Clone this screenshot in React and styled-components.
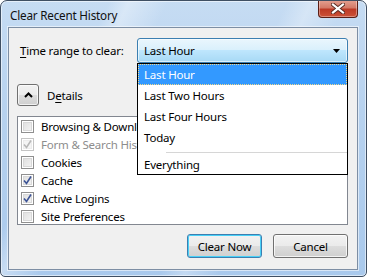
import React from 'react';
import styled, { createGlobalStyle } from 'styled-components';

const Global = createGlobalStyle`
  html, body {
    margin: 0;
    padding: 0;
    background: #ffffff;
  }
  body {
    font-family: 'Noto Sans', 'Liberation Sans', sans-serif;
    font-size: 11.5px;
    letter-spacing: -0.2px;
    color: #000;
  }
`;

const Window = styled.div`
  width: 367px;
  height: 277px;
  box-sizing: border-box;
  display: flex;
  flex-direction: column;
  padding: 0 8px 6px 7px;
  border: 1px solid #3f4f63;
  border-radius: 7px 7px 5px 5px;
  background:
    linear-gradient(115deg, transparent 0 22%, rgba(255, 255, 255, 0.35) 26%, transparent 34%,
      transparent 58%, rgba(255, 255, 255, 0.3) 63%, transparent 70%),
    linear-gradient(180deg, #c6dcf3 0%, #b7d2ef 40%, #a9c9ec 100%);
  box-shadow: inset 0 0 0 1px rgba(255, 255, 255, 0.55);
  overflow: hidden;
`;

const TitleBar = styled.div`
  height: 26px;
  display: flex;
  align-items: flex-start;
  justify-content: space-between;
`;

const Title = styled.div`
  padding: 6px 0 0 2px;
  font-size: 11.7px;
  color: #101010;
`;

const CloseButton = styled.div`
  width: 40px;
  height: 18px;
  margin-top: -1px;
  box-sizing: border-box;
  display: flex;
  align-items: center;
  justify-content: center;
  border: 1px solid #5a1e16;
  border-top: none;
  border-radius: 0 0 4px 4px;
  background: linear-gradient(180deg, #e5a293 0%, #d47a68 45%, #bd3a26 55%, #cc5238 100%);
  box-shadow: inset 0 0 0 1px rgba(255, 255, 255, 0.35);
`;

const Client = styled.div`
  flex: 1;
  display: flex;
  flex-direction: column;
  padding: 10px 9px 0 8px;
  background: #f0f0f0;
  border: 1px solid #7d8ea4;
  box-shadow: 0 0 0 1px rgba(255, 255, 255, 0.55);
`;

const RangeRow = styled.div`
  display: flex;
  align-items: center;
  justify-content: space-between;
  height: 25px;
`;

const Label = styled.span`
  margin-left: 3px;
  color: #000;
`;

const Key = styled.span`
  text-decoration: underline;
  text-underline-offset: 2px;
`;

const SelectWrap = styled.div`
  position: relative;
  width: 211px;
  height: 25px;
`;

const Select = styled.div`
  height: 100%;
  box-sizing: border-box;
  display: flex;
  align-items: center;
  justify-content: space-between;
  padding: 0 6px 0 6px;
  border: 1px solid #3c7fb1;
  border-radius: 3px;
  background: linear-gradient(180deg, #eaf6fd 0%, #d9f0fc 48%, #bee6fd 50%, #a7d9f5 100%);
  box-shadow: inset 0 0 0 1px rgba(255, 255, 255, 0.6);
`;

const Popup = styled.div`
  position: absolute;
  top: 100%;
  left: 0;
  width: 211px;
  box-sizing: border-box;
  background: #fff;
  border: 1px solid #000;
  z-index: 2;
`;

const Option = styled.div`
  height: ${(p) => (p.$short ? 20 : 21)}px;
  box-sizing: border-box;
  display: flex;
  align-items: center;
  padding-left: 6px;
  color: ${(p) => (p.$active ? '#fff' : '#000')};
  background: ${(p) => (p.$active ? '#3399ff' : 'transparent')};
  outline: ${(p) => (p.$active ? '1px dotted #f3d98a' : 'none')};
  outline-offset: -1px;
`;

const Separator = styled.div`
  height: 6px;
  display: flex;
  align-items: center;
  padding-left: 28px;
  &::after {
    content: '';
    flex: 1;
    height: 1px;
    margin-top: 2px;
    background: #d6d6d6;
  }
`;

const DetailsRow = styled.div`
  display: flex;
  align-items: center;
  gap: 8px;
  margin-top: 21px;
  height: 22px;
`;

const ToggleButton = styled.div`
  width: 22px;
  height: 22px;
  box-sizing: border-box;
  display: flex;
  align-items: center;
  justify-content: center;
  border: 1px solid #707070;
  border-radius: 3px;
  background: linear-gradient(180deg, #f2f2f2 0%, #ebebeb 48%, #dddddd 50%, #cfcfcf 100%);
  box-shadow: inset 0 0 0 1px rgba(255, 255, 255, 0.7);
`;

const List = styled.div`
  margin-top: 10px;
  height: 109px;
  box-sizing: border-box;
  background: #fff;
  border: 1px solid #828790;
  overflow: hidden;
`;

const Item = styled.div`
  height: 18px;
  display: flex;
  align-items: center;
  gap: 7px;
  padding-left: 3px;
  white-space: nowrap;
  color: ${(p) => (p.$disabled ? '#8d8d8d' : '#000')};
`;

const Box = styled.div`
  width: 13px;
  height: 13px;
  box-sizing: border-box;
  flex: none;
  display: flex;
  align-items: center;
  justify-content: center;
  border: 1px solid ${(p) => (p.$disabled ? '#c5c5c5' : '#8f8f8f')};
  box-shadow: inset 0 0 0 1px #fff, inset 0 0 0 2px ${(p) => (p.$disabled ? '#ececec' : '#d8d8d8')};
  background: ${(p) =>
    p.$disabled ? '#f4f4f4' : 'linear-gradient(135deg, #dcdcdc 0%, #f6f6f6 100%)'};
`;

const Footer = styled.div`
  display: flex;
  justify-content: flex-end;
  gap: 11px;
  margin-top: 9px;
`;

const Button = styled.div`
  width: 75px;
  height: 24px;
  box-sizing: border-box;
  display: flex;
  align-items: center;
  justify-content: center;
  border: 1px solid ${(p) => (p.$default ? '#3c7fb1' : '#707070')};
  border-radius: 3px;
  background: linear-gradient(180deg, #f2f2f2 0%, #ebebeb 48%, #dddddd 50%, #cfcfcf 100%);
  box-shadow: inset 0 0 0 1px ${(p) => (p.$default ? '#48d0f7' : 'rgba(255,255,255,0.75)')};
  color: #000;
`;

const Check = ({ disabled }) => (
  <svg width="9" height="9" viewBox="0 0 9 9">
    <path
      d="M1 4.5 L3.5 7.5 L8 0.5"
      fill="none"
      stroke={disabled ? '#b8b8b8' : '#3d5496'}
      strokeWidth="1.6"
    />
  </svg>
);

const items = [
  { label: 'Browsing & Download History', checked: false },
  { label: 'Form & Search History', checked: true, disabled: true },
  { label: 'Cookies', checked: false },
  { label: 'Cache', checked: true },
  { label: 'Active Logins', checked: true },
  { label: 'Site Preferences', checked: false },
];

export default function App() {
  return (
    <>
      <Global />
      <Window>
        <TitleBar>
          <Title>Clear Recent History</Title>
          <CloseButton>
            <svg width="14" height="11" viewBox="0 0 14 11">
              <path
                d="M2 1.5 L12 9.5 M12 1.5 L2 9.5"
                stroke="#5a2a22"
                strokeWidth="4"
                strokeLinecap="square"
              />
              <path
                d="M2 1.5 L12 9.5 M12 1.5 L2 9.5"
                stroke="#ffffff"
                strokeWidth="2.2"
                strokeLinecap="square"
              />
            </svg>
          </CloseButton>
        </TitleBar>
        <Client>
          <RangeRow>
            <Label>
              <Key>T</Key>ime range to clear:
            </Label>
            <SelectWrap>
              <Select>
                <span>Last Hour</span>
                <svg width="7" height="4" viewBox="0 0 7 4" style={{ marginRight: 1 }}>
                  <path d="M0 0 H7 L3.5 4 Z" fill="#000" />
                </svg>
              </Select>
              <Popup>
                <Option $active>Last Hour</Option>
                <Option>Last Two Hours</Option>
                <Option>Last Four Hours</Option>
                <Option>Today</Option>
                <Separator />
                <Option $short>Everything</Option>
              </Popup>
            </SelectWrap>
          </RangeRow>
          <DetailsRow>
            <ToggleButton>
              <svg width="9" height="6" viewBox="0 0 9 6">
                <path d="M1 5 L4.5 1.5 L8 5" fill="none" stroke="#000" strokeWidth="2" />
              </svg>
            </ToggleButton>
            <span>
              D<Key>e</Key>tails
            </span>
          </DetailsRow>
          <List>
            {items.map((it) => (
              <Item key={it.label} $disabled={it.disabled}>
                <Box $disabled={it.disabled}>{it.checked && <Check disabled={it.disabled} />}</Box>
                {it.label}
              </Item>
            ))}
          </List>
          <Footer>
            <Button $default>Clear Now</Button>
            <Button>Cancel</Button>
          </Footer>
        </Client>
      </Window>
    </>
  );
}
